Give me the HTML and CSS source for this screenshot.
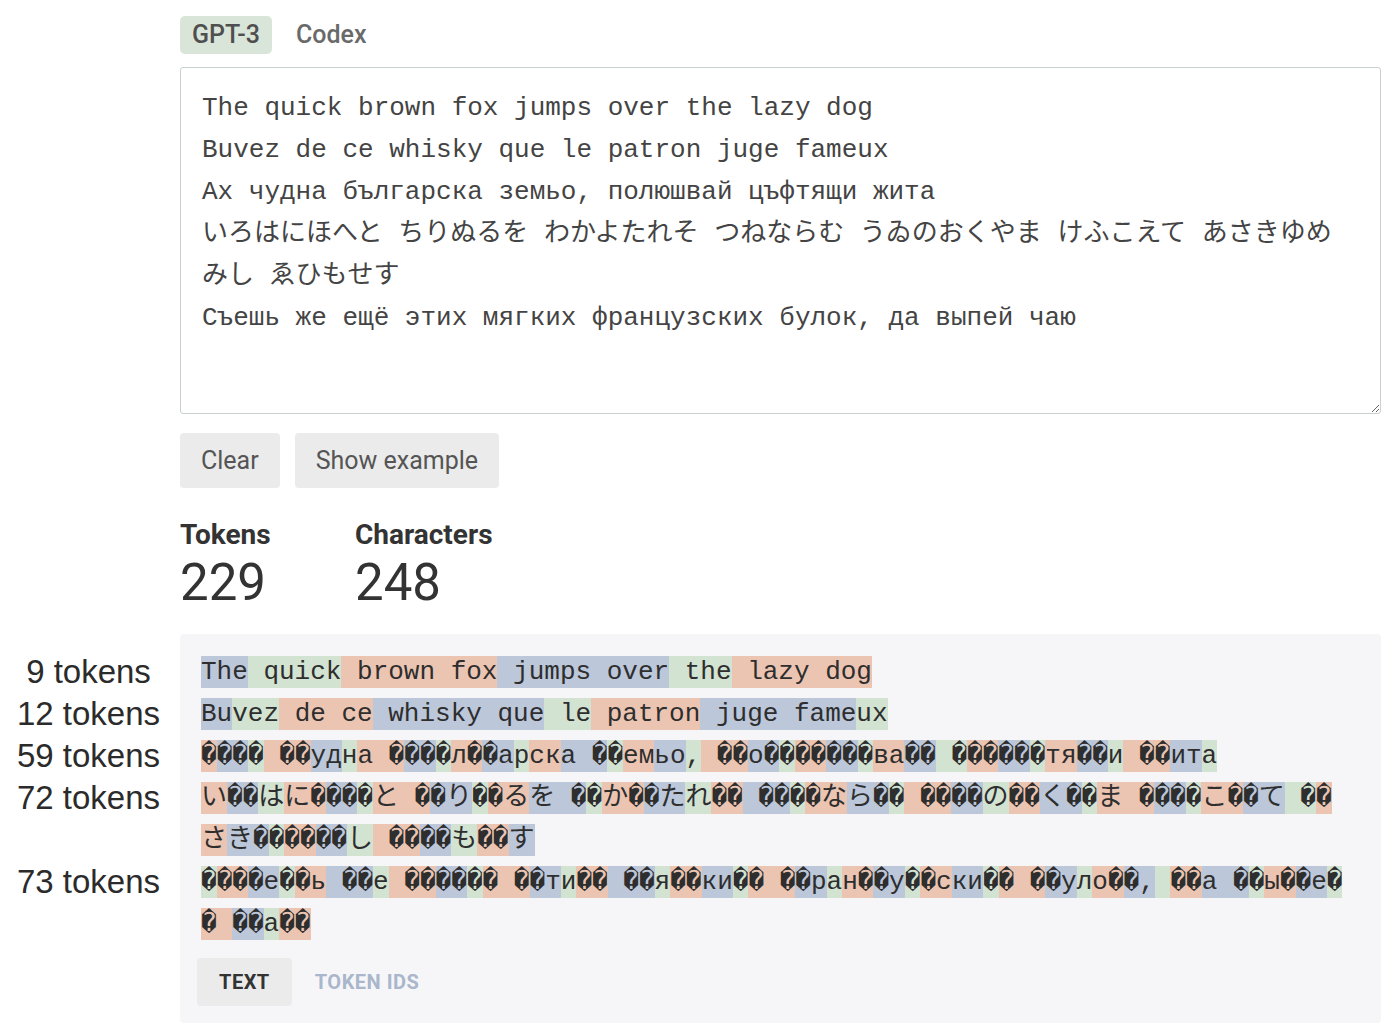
FILE: index.html
```html
<!DOCTYPE html>
<html lang="en">
<head>
<meta charset="utf-8">
<title>Tokenizer</title>
<link rel="stylesheet" href="styles.css">
</head>
<body>
<div class="app">
  <div class="main">
    <div class="model-tabs">
      <button class="model-tab active">GPT-3</button>
      <button class="model-tab">Codex</button>
    </div>
    <textarea class="input" spellcheck="false">The quick brown fox jumps over the lazy dog
Buvez de ce whisky que le patron juge fameux
Ах чудна българска земьо, полюшвай цъфтящи жита
いろはにほへと ちりぬるを わかよたれそ つねならむ うゐのおくやま けふこえて あさきゆめみし ゑひもせす
Съешь же ещё этих мягких французских булок, да выпей чаю</textarea>
    <div class="actions">
      <button class="btn">Clear</button>
      <button class="btn">Show example</button>
    </div>
    <div class="stats">
      <div class="stat stat-tokens">
        <div class="stat-label">Tokens</div>
        <div class="stat-value">229</div>
      </div>
      <div class="stat">
        <div class="stat-label">Characters</div>
        <div class="stat-value">248</div>
      </div>
    </div>
  </div>

  <div class="result">
    <div class="labels">
      <div class="lbl">9 tokens</div>
      <div class="lbl">12 tokens</div>
      <div class="lbl">59 tokens</div>
      <div class="lbl">72 tokens</div>
      <div class="lbl"></div>
      <div class="lbl">73 tokens</div>
    </div>
    <div class="tokens-box">
      <div class="tokens">
        <div class="tline"><span class="b">The</span><span class="g"> quick</span><span class="o"> brown fox</span><span class="b"> jumps over</span><span class="g"> the</span><span class="o"> lazy dog</span></div>
        <div class="tline"><span class="b">Bu</span><span class="g">vez</span><span class="o"> de ce</span><span class="b"> whisky que</span><span class="g"> le</span><span class="o"> patron</span><span class="b"> juge fame</span><span class="g">ux</span></div>
        <div class="tline"><span class="o">�</span><span class="b">��</span><span class="g">�</span><span class="o"> ��</span><span class="b">уд</span><span class="g">н</span><span class="o">а �</span><span class="b">��</span><span class="g">�</span><span class="o">л�</span><span class="b">�а</span><span class="g">р</span><span class="o">ск</span><span class="b">а �</span><span class="g">�</span><span class="o">ем</span><span class="b">ьо</span><span class="g">,</span><span class="o"> ��</span><span class="b">о�</span><span class="g">�</span><span class="o">��</span><span class="b">��</span><span class="g">�</span><span class="o">ва</span><span class="b">��</span><span class="g"> �</span><span class="o">��</span><span class="b">��</span><span class="g">�</span><span class="o">тя</span><span class="b">��</span><span class="g">и</span><span class="o"> ��</span><span class="b">ит</span><span class="g">а</span></div>
        <div class="tline"><span class="o">い</span><span class="b">��</span><span class="g">は</span><span class="o">に�</span><span class="b">��</span><span class="g">�</span><span class="o">と �</span><span class="b">�り</span><span class="g">�</span><span class="o">�る</span><span class="b">を �</span><span class="g">�</span><span class="o">か�</span><span class="b">�た</span><span class="g">れ</span><span class="o">��</span><span class="b"> ��</span><span class="g">�</span><span class="o">�な</span><span class="b">ら�</span><span class="g">�</span><span class="o"> ��</span><span class="b">��</span><span class="g">の</span><span class="o">��</span><span class="b">く�</span><span class="g">�</span><span class="o">ま �</span><span class="b">��</span><span class="g">�</span><span class="o">こ�</span><span class="b">�て</span><span class="g"> �</span><span class="o">�さ</span><span class="b">き�</span><span class="g">�</span><span class="o">��</span><span class="b">��</span><span class="g">し</span><span class="o"> ��</span><span class="b">��</span><span class="g">も</span><span class="o">��</span><span class="b">す</span></div>
        <div class="tline"><span class="g">�</span><span class="o">��</span><span class="b">�е</span><span class="g">�</span><span class="o">�ь</span><span class="b"> ��</span><span class="g">е</span><span class="o"> ��</span><span class="b">��</span><span class="g">�</span><span class="o">� �</span><span class="b">�т</span><span class="g">и</span><span class="o">��</span><span class="b"> ��</span><span class="g">я</span><span class="o">��</span><span class="b">ки</span><span class="g">�</span><span class="o">� �</span><span class="b">�р</span><span class="g">а</span><span class="o">н�</span><span class="b">�у</span><span class="g">�</span><span class="o">�с</span><span class="b">ки</span><span class="g">�</span><span class="o">� �</span><span class="b">�у</span><span class="g">л</span><span class="o">о�</span><span class="b">�,</span><span class="g"> </span><span class="o">��</span><span class="b">а �</span><span class="g">�</span><span class="o">ы�</span><span class="b">�е</span><span class="g">�</span><span class="o">� </span><span class="b">��</span><span class="g">а</span><span class="o">��</span></div>
      </div>
      <div class="view-tabs">
        <button class="view-tab active">TEXT</button>
        <button class="view-tab">TOKEN IDS</button>
      </div>
    </div>
  </div>
</div>
</body>
</html>
```

FILE: styles.css
```css
* {
  box-sizing: border-box;
}

html, body {
  margin: 0;
  background: #ffffff;
}

body {
  font-family: Roboto, "Noto Sans", sans-serif;
  color: #333333;
}

.app {
  padding-top: 16px;
}

.main {
  margin-left: 180px;
  width: 1201px;
}

/* model tabs */
.model-tabs {
  display: flex;
  height: 38px;
}

.model-tab {
  font-family: Roboto, sans-serif;
  font-size: 25px;
  font-weight: 500;
  color: #6a6a6a;
  background: transparent;
  border: 0;
  border-radius: 5px;
  padding: 0 12px;
  height: 38px;
  line-height: 38px;
  margin-right: 12px;
  cursor: pointer;
}

.model-tab.active {
  background: #dae5da;
  color: #4f4f4f;
}

/* input */
.input {
  display: block;
  margin-top: 13px;
  width: 1201px;
  height: 347px;
  padding: 19px 28px 19px 21px;
  border: 1px solid #c9d2cc;
  border-radius: 3px;
  font-family: "Liberation Mono", "DejaVu Sans Mono", "Noto Sans CJK JP", monospace;
  font-size: 26px;
  line-height: 42px;
  color: #444444;
  background: #ffffff;
  outline: none;
  resize: vertical;
  overflow: hidden;
}

/* buttons */
.actions {
  display: flex;
  gap: 15px;
  margin-top: 19px;
}

.btn {
  font-family: Roboto, sans-serif;
  font-size: 25px;
  color: #555555;
  background: #ebebeb;
  border: 0;
  border-radius: 4px;
  height: 55px;
  padding: 0 21px;
  cursor: pointer;
}

/* stats */
.stats {
  display: flex;
  margin-top: 32px;
}

.stat-tokens {
  width: 175px;
}

.stat-label {
  font-size: 28px;
  font-weight: 700;
  line-height: 30px;
  color: #333333;
}

.stat-value {
  font-size: 51px;
  line-height: 56px;
  margin-top: 5px;
  color: #333333;
}

/* result */
.result {
  display: grid;
  grid-template-columns: 180px 1201px;
  margin-top: 23px;
}

.labels {
  padding-top: 17px;
  padding-right: 3px;
}

.lbl {
  height: 42px;
  line-height: 42px;
  text-align: center;
  font-family: "Liberation Sans", Arial, sans-serif;
  font-size: 33px;
  color: #2b2b2b;
}

.tokens-box {
  background: #f6f6f8;
  border-radius: 4px;
  padding: 17px 26px 17px 21px;
}

.tokens {
  font-family: "Liberation Mono", "DejaVu Sans Mono", "Noto Sans CJK JP", monospace;
  font-size: 26px;
  line-height: 42px;
  color: #2e2e2e;
}

.tline {
  white-space: pre-wrap;
  word-break: break-all;
}

.tline span {
  padding: 1px 0;
}

.b { background: #bcc7da; }
.g { background: #d2e3d2; }
.o { background: #ecc5b2; }

.view-tabs {
  display: flex;
  gap: 1px;
  margin-top: 13px;
  margin-left: -4px;
}

.view-tab {
  font-family: Roboto, sans-serif;
  font-size: 20px;
  font-weight: 700;
  letter-spacing: 0.5px;
  height: 48px;
  padding: 0 22px;
  border: 0;
  border-radius: 4px;
  background: transparent;
  color: #a9b6cb;
  cursor: pointer;
}

.view-tab.active {
  background: #ebebeb;
  color: #333333;
}
```
